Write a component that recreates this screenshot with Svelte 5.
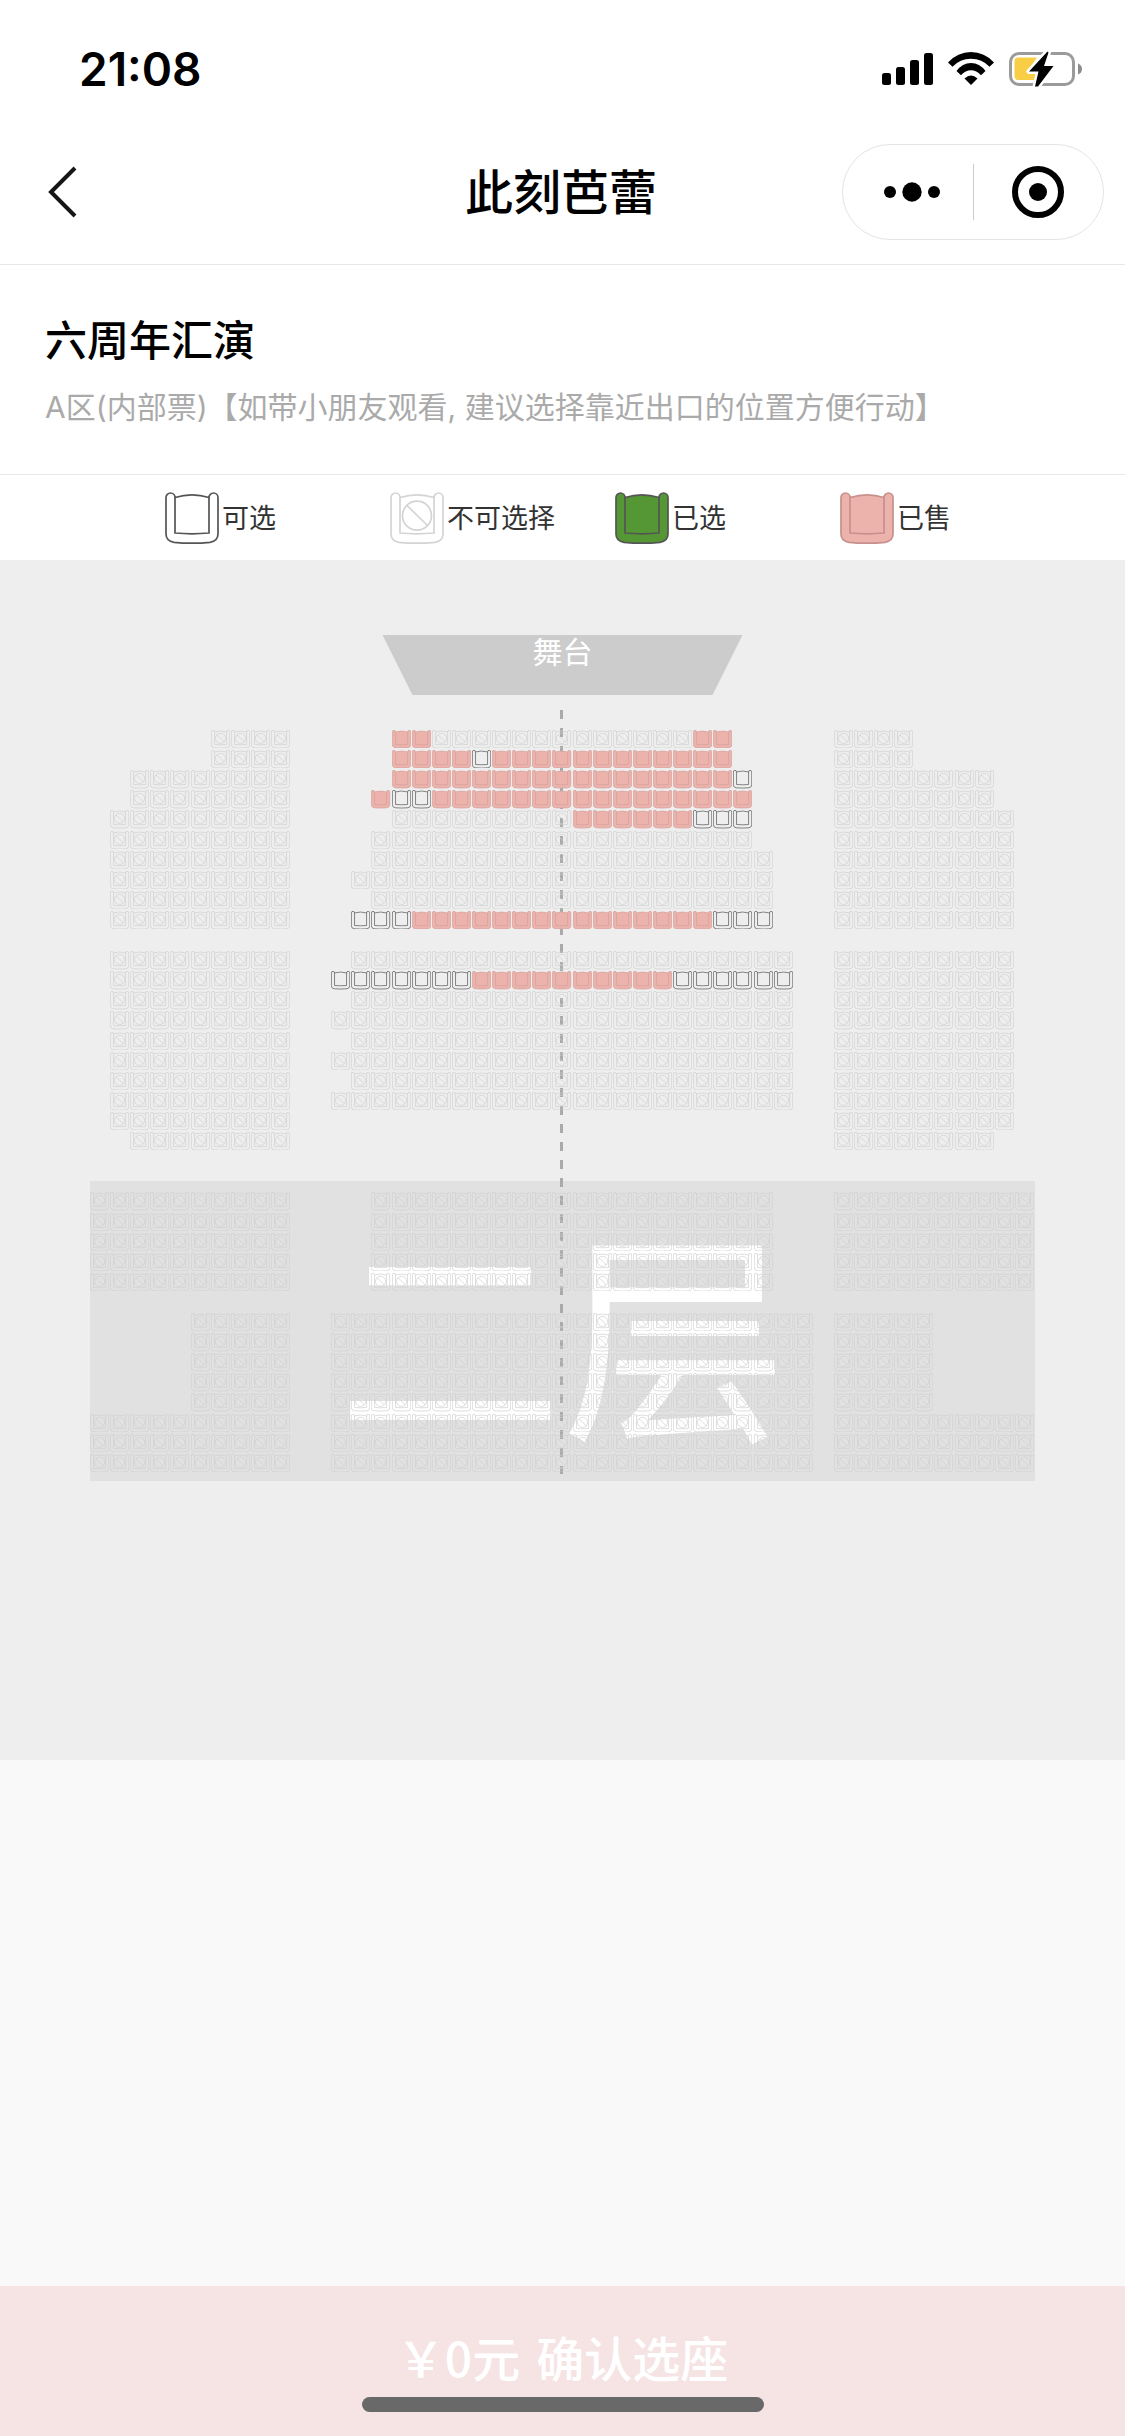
<script>
  const COLS = 47;

  // Each entry: [first row, last row, runs]. A run is "from-to:state" with
  // x = unavailable, f = free, s = sold.
  const plan = [
    [0, 0, '6-9:x 15-16:s 17-29:x 30-31:s 37-40:x'],
    [1, 1, '6-9:x 15-18:s 19-19:f 20-31:s 37-40:x'],
    [2, 2, '2-9:x 15-31:s 32-32:f 37-44:x'],
    [3, 3, '2-9:x 14-14:s 15-16:f 17-32:s 37-44:x'],
    [4, 4, '1-9:x 15-23:x 24-29:s 30-32:f 37-45:x'],
    [5, 5, '1-9:x 14-32:x 37-45:x'],
    [6, 6, '1-9:x 14-33:x 37-45:x'],
    [7, 7, '1-9:x 13-33:x 37-45:x'],
    [8, 8, '1-9:x 14-33:x 37-45:x'],
    [9, 9, '1-9:x 13-15:f 16-30:s 31-33:f 37-45:x'],
    [11, 11, '1-9:x 13-34:x 37-45:x'],
    [12, 12, '1-9:x 12-18:f 19-28:s 29-34:f 37-45:x'],
    [13, 13, '1-9:x 13-34:x 37-45:x'],
    [14, 14, '1-9:x 12-34:x 37-45:x'],
    [15, 15, '1-9:x 13-34:x 37-45:x'],
    [16, 16, '1-9:x 12-34:x 37-45:x'],
    [17, 17, '1-9:x 13-34:x 37-45:x'],
    [18, 18, '1-9:x 12-34:x 37-45:x'],
    [19, 19, '1-9:x 37-45:x'],
    [20, 20, '2-9:x 37-44:x'],
    [23, 27, '0-9:x 14-33:x 37-46:x'],
    [29, 33, '5-9:x 12-35:x 37-41:x'],
    [34, 36, '0-9:x 12-35:x 37-46:x']
  ];

  const states = { x: 'blocked', f: 'free', s: 'sold' };
  const labels = { blocked: '不可选择', free: '可选', sold: '已售', picked: '已选' };

  function buildSeats() {
    const list = [];
    for (const [first, last, runs] of plan) {
      for (let row = first; row <= last; row++) {
        for (const run of runs.split(' ')) {
          const [range, code] = run.split(':');
          const [from, to] = range.split('-').map(Number);
          for (let col = from; col <= to; col++) {
            list.push({ id: row * COLS + col, row, col, state: states[code] });
          }
        }
      }
    }
    return list;
  }

  let seats = $state(buildSeats());
  const picked = $derived(seats.filter((s) => s.state === 'picked').length);

  function toggle(seat) {
    if (seat.state === 'free') seat.state = 'picked';
    else if (seat.state === 'picked') seat.state = 'free';
  }

  const legend = ['free', 'blocked', 'picked', 'sold'];
</script>

{#snippet chair(state)}
  <svg class="chair {state}" viewBox="0 0 54 52" aria-hidden="true">
    <path class="body" d="M10 5.500Q27 .4 44 5.500a4.500 4.500 0 0 1 9 0V42Q53 49 45 50.300Q27 52 9 50.300Q1 49 1 42V5.500a4.500 4.500 0 0 1 9 0Z" />
    <path class="line" d="M10 5.500V41Q27 42.600 44 41V5.500" />
    {#if state === 'blocked'}
      <circle class="line" cx="27" cy="23.700" r="14.500" />
      <path class="line" d="M17 13.500L37.500 33.500" />
    {/if}
  </svg>
{/snippet}

<div class="page">
  <div class="status">
    <time>21:08</time>
    <div class="indicators">
      <svg width="51" height="34" viewBox="0 0 51 34" aria-hidden="true">
        <rect x="0" y="21" width="9" height="12" rx="2.500" />
        <rect x="14" y="15" width="9" height="18" rx="2.500" />
        <rect x="28" y="8" width="9" height="25" rx="2.500" />
        <rect x="42" y="1" width="9" height="32" rx="2.500" />
      </svg>
      <svg width="46" height="34" viewBox="0 0 46 34" aria-hidden="true">
        <path d="M0 10.500Q9.500 0 23 0T46 10.500L41.500 14.800Q34 6.800 23 6.800T4.500 14.800Z" />
        <path d="M8.500 19Q14.500 11 23 11T37.500 19L33 23.200Q28.500 18.300 23 18.300T13 23.200Z" />
        <path d="M16.500 26.500Q23 20.500 29.500 26.500L23 33Z" />
      </svg>
      <svg width="74" height="36" viewBox="0 0 74 36" aria-hidden="true">
        <rect x="1.500" y="2.500" width="63" height="31" rx="8.500" fill="none" stroke="#9b9b9b" stroke-width="3" />
        <path d="M69 12.500Q73 14 73 18T69 23.500Z" fill="#8c8c8c" />
        <path d="M9.500 6.500H28L18.500 20.500H28L25.500 29H9.500Q5.500 29 5.500 25V10.500Q5.500 6.500 9.500 6.500Z" fill="#f7ce46" />
        <path d="M38.500 .5L20 20.500H29.500L26 35.500H29L44.500 15H35L39.500 1.500Z" stroke="#fff" stroke-width="5" stroke-linejoin="round" />
        <path d="M38.500 .5L20 20.500H29.500L26 35.500H29L44.500 15H35L39.500 1.500Z" />
      </svg>
    </div>
  </div>

  <header class="nav">
    <button class="back" aria-label="返回">
      <svg width="30" height="52" viewBox="0 0 30 52" aria-hidden="true">
        <path d="M27 2L3 26L27 50" fill="none" stroke="#161616" stroke-width="4" />
      </svg>
    </button>
    <h1>此刻芭蕾</h1>
    <div class="capsule">
      <button aria-label="更多">
        <svg width="66" height="20" viewBox="-8 0 66 20" aria-hidden="true">
          <circle cx="7" cy="10" r="6" /><circle cx="29" cy="10" r="9.700" /><circle cx="51" cy="10" r="6" />
        </svg>
      </button>
      <span class="divider"></span>
      <button aria-label="关闭">
        <svg width="52" height="52" viewBox="0 0 52 52" aria-hidden="true">
          <circle cx="26" cy="26" r="23" fill="none" stroke="#000" stroke-width="6" />
          <circle cx="26" cy="26" r="9" />
        </svg>
      </button>
    </div>
  </header>

  <section class="show">
    <h2>六周年汇演</h2>
    <p>A区(内部票)【如带小朋友观看, 建议选择靠近出口的位置方便行动】</p>
  </section>

  <ul class="legend">
    {#each legend as state}
      <li>{@render chair(state)}<span>{labels[state]}</span></li>
    {/each}
  </ul>

  <main class="map">
    <div class="stage">舞台</div>
    <div class="hall">
      <div class="balcony"><span>二层</span></div>
      <div class="axis"></div>
      <div class="seats">
        {#each seats as seat (seat.id)}
          <button
            class="seat"
            style="grid-area: {seat.row + 1} / {seat.col + 1}"
            disabled={seat.state === 'blocked' || seat.state === 'sold'}
            aria-label="{seat.row + 1}排{seat.col + 1}座 {labels[seat.state]}"
            onclick={() => toggle(seat)}
          >
            {@render chair(seat.state)}
          </button>
        {/each}
      </div>
    </div>
  </main>

  <button class="confirm" class:ready={picked > 0}>
    <span>￥0元</span>
    <span>确认选座</span>
    <i class="home"></i>
  </button>
</div>

<style>
  :global(body) {
    background: #f9f9f9;
  }

  .page {
    min-height: 100vh;
    display: flex;
    flex-direction: column;
    font-family: 'Noto Sans CJK SC', 'Noto Sans', sans-serif;
    color: #000;
  }

  button {
    appearance: none;
    border: 0;
    padding: 0;
    margin: 0;
    background: none;
    font: inherit;
    color: inherit;
  }

  svg {
    display: block;
  }

  .status {
    height: 138px;
    box-sizing: border-box;
    padding: 0 42px 0 79px;
    display: flex;
    align-items: center;
    justify-content: space-between;
    background: #fff;
  }

  time {
    font: 600 46px/54px Inter, sans-serif;
  }

  .indicators {
    display: flex;
    align-items: center;
    gap: 15px;
  }

  .nav {
    height: 108px;
    padding: 0 21px 18px 48px;
    display: grid;
    grid-template-columns: 1fr auto 1fr;
    align-items: center;
    background: #fff;
    border-bottom: 1px solid #e8e8e8;
  }

  .back {
    justify-self: start;
  }

  h1 {
    margin: 0;
    padding: 0 30px 6px 0;
    font-size: 48px;
    font-weight: 500;
    line-height: 72px;
  }

  .capsule {
    justify-self: end;
    width: 260px;
    height: 94px;
    border: 1px solid #e4e4e4;
    border-radius: 48px;
    display: flex;
    align-items: center;
  }

  .capsule button {
    flex: 1;
    display: flex;
    justify-content: center;
  }

  .capsule .divider {
    width: 1px;
    height: 56px;
    background: #ccc;
  }

  .show {
    padding: 40px 45px 44px;
    background: #fff;
    border-bottom: 1px solid #e8e8e8;
  }

  h2 {
    margin: 0;
    font-size: 42px;
    font-weight: 500;
    line-height: 66px;
  }

  .show p {
    margin: 13px 0 0;
    font-family: Inter, 'Noto Sans CJK SC', sans-serif;
    font-size: 30px;
    line-height: 46px;
    color: #aaa;
  }

  .legend {
    margin: 0;
    padding: 0 60px 0 165px;
    height: 85px;
    list-style: none;
    display: grid;
    grid-template-columns: repeat(4, 1fr);
    align-items: center;
    background: #fff;
  }

  .legend li {
    display: flex;
    align-items: center;
    gap: 3px;
    font-size: 27px;
    line-height: 38px;
    color: #333;
    white-space: nowrap;
  }

  .legend span {
    padding-bottom: 2px;
  }

  .legend .chair {
    width: 54px;
    height: 52px;
  }

  .chair {
    --fill: transparent;
    --edge: #555;
  }

  .chair.blocked {
    --edge: #d4d4d4;
  }

  .chair.picked {
    --fill: #549734;
  }

  .chair.sold {
    --fill: #ecb3ad;
    --edge: #c6908c;
  }

  .chair .body {
    fill: var(--fill);
    stroke: var(--edge);
    stroke-width: 1.7px;
  }

  .chair .line {
    fill: none;
    stroke: var(--edge);
    stroke-width: 1.7px;
  }

  .map {
    padding: 75px 8% 286px;
    background: #eee;
  }

  .stage {
    width: 360px;
    height: 60px;
    margin: 0 auto 35px;
    background: #ccc;
    clip-path: polygon(0 0, 100% 0, 330px 100%, 30px 100%);
    text-align: center;
    font-size: 30px;
    line-height: 30px;
    color: #fff;
  }

  .hall {
    position: relative;
  }

  .seats {
    position: relative;
    display: grid;
    grid-template-columns: repeat(47, 1fr);
    grid-template-rows: repeat(37, 1fr);
    aspect-ratio: 47 / 37;
  }

  .seat {
    min-width: 0;
    min-height: 0;
    display: flex;
    align-items: flex-start;
  }

  .seat .chair {
    width: 95%;
    height: auto;
  }

  .seat .chair .body,
  .seat .chair .line {
    stroke-width: 2px;
  }

  .seat .chair.blocked {
    --edge: #d0d0d0;
  }

  .seat .chair.sold {
    --edge: #d6a09b;
  }

  .balcony {
    position: absolute;
    left: 0;
    right: 0;
    top: 60.6%;
    height: 300px;
    box-sizing: border-box;
    padding-bottom: 10px;
    display: flex;
    align-items: center;
    justify-content: center;
    background: #e1e1e1;
    font-size: 225px;
    line-height: 290px;
    color: #fff;
  }

  .axis {
    position: absolute;
    top: -20px;
    bottom: 0;
    left: 50%;
    width: 3px;
    margin-left: -3px;
    background: repeating-linear-gradient(#aaa 0 9px, transparent 9px 18px);
  }

  .confirm {
    position: relative;
    margin-top: auto;
    height: 150px;
    box-sizing: border-box;
    padding-bottom: 10px;
    display: flex;
    align-items: center;
    justify-content: center;
    gap: 16px;
    background: #f6e4e4;
    color: #fff;
    font-size: 48px;
    font-weight: 500;
    line-height: 72px;
  }

  .confirm.ready {
    background: #e58f8f;
  }

  .home {
    position: absolute;
    left: 50%;
    bottom: 24px;
    width: 402px;
    height: 15px;
    margin-left: -201px;
    border-radius: 8px;
    background: #696969;
  }
</style>
